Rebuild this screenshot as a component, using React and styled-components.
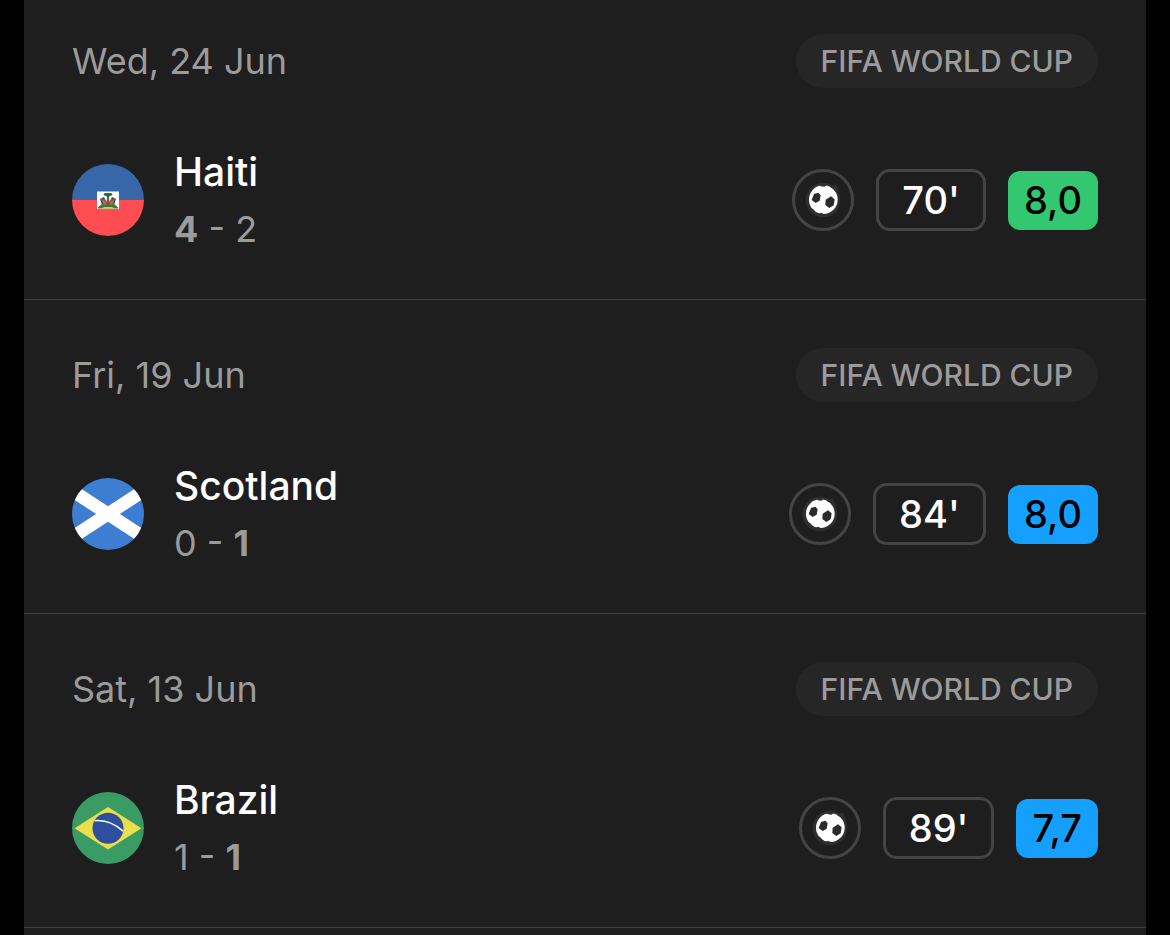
import React from 'react'
import styled, { createGlobalStyle } from 'styled-components'

const GlobalStyle = createGlobalStyle`
  * {
    box-sizing: border-box;
  }
  body {
    margin: 0;
    background: #000;
    color: #fff;
    font-family: Inter, 'Liberation Sans', sans-serif;
  }
`

const Page = styled.main`
  padding: 0 24px;
  height: 100vh;
  overflow: hidden;
`

const MatchList = styled.ul`
  list-style: none;
  margin: 0;
  padding: 0;
  min-height: 100%;
  background: #1e1e1e;
`

const MatchItem = styled.li`
  display: flex;
  flex-direction: column;
  gap: 59px;
  padding: 48px 48px 46px;
  border-bottom: 1px solid #3e3e3e;

  &:first-child {
    padding-top: 34px;
  }
`

const Row = styled.div`
  display: flex;
  justify-content: space-between;
  align-items: center;
`

const MatchDate = styled.time`
  color: #9b9b9b;
  font-size: 36px;
  line-height: 54px;
`

const League = styled.span`
  padding: 0 25px;
  border-radius: 27px;
  background: #262626;
  color: #9b9b9b;
  font-size: 30px;
  font-weight: 500;
  line-height: 54px;
`

const Team = styled.div`
  display: flex;
  align-items: center;
  gap: 30px;
`

const Flag = styled.svg`
  width: 72px;
  height: 72px;
  border-radius: 50%;
`

const TeamInfo = styled.div`
  display: flex;
  flex-direction: column;
  gap: 8px;
`

const TeamName = styled.h2`
  margin: 0;
  font-size: 39px;
  font-weight: 500;
  line-height: 50px;
`

const Score = styled.p`
  margin: 0;
  color: #9b9b9b;
  font-size: 36px;
  line-height: 48px;
`

const Goals = styled.span`
  font-weight: ${({ $winner }) => ($winner ? 700 : 400)};
`

const Stats = styled.div`
  display: flex;
  align-items: center;
  gap: 22px;
`

const GoalBadge = styled.span`
  display: flex;
  align-items: center;
  justify-content: center;
  width: 62px;
  height: 62px;
  border: 3px solid #444;
  border-radius: 50%;
`

const Ball = styled.svg`
  width: 36px;
  height: 36px;
`

const Minutes = styled.span`
  padding: 0 23px;
  border: 3px solid #444;
  border-radius: 14px;
  font-size: 38px;
  font-weight: 500;
  line-height: 56px;
`

const Rating = styled.span`
  padding: 0 16px;
  border-radius: 12px;
  background: ${({ $best }) => ($best ? '#33c771' : '#159fff')};
  color: #000;
  font-size: 38px;
  font-weight: 500;
  line-height: 59px;
`

const HaitiFlag = () => (
  <Flag viewBox="0 0 72 72" role="img" aria-label="Haiti">
    <path fill="#3766a9" d="M0 0h72v36H0z" />
    <path fill="#ff4d51" d="M0 36h72v36H0z" />
    <path fill="#fff" d="M25 27.500h22v17.500H25z" />
    <path fill="#397c39" d="M25.500 44.500q3-6 10.500-6t10.500 6z" />
    <path fill="#d9c27c" d="M29 44.800l3-1.800h8l3 1.800z" />
    <path fill="#2c3e86" d="M28 35l4-2 3 6-5 2zM44 35l-4-2-3 6 5 2z" />
    <path fill="#b64b3b" d="M29.500 37l3-2.500 2.500 5-3 1.500zM42.500 37l-3-2.500-2.500 5 3 1.500z" />
    <path stroke="#a8863e" strokeWidth="1" fill="none" d="M28 42l7-5M44 42l-7-5M29 34l5 7M43 34l-5 7" />
    <path fill="#7b5a2c" d="M35.200 31h1.600l.8 11h-3.200z" />
    <path fill="#1d6b35" d="M31.500 30.500q1-2 3-1.200 1.500-1.300 3 0 2-.8 3 1.200-1 1.700-2.500 1.200-1 1.800-2 1.800t-2-1.800q-1.500.5-2.500-1.200z" />
  </Flag>
)

const ScotlandFlag = () => (
  <Flag viewBox="0 0 72 72" role="img" aria-label="Scotland">
    <path fill="#3d7dd2" d="M0 0h72v72H0z" />
    <path stroke="#fff" strokeWidth="13" d="M-6 8.500l84 55M78 8.500l-84 55" />
  </Flag>
)

const BrazilFlag = () => (
  <Flag viewBox="0 0 72 72" role="img" aria-label="Brazil">
    <path fill="#3a9b64" d="M0 0h72v72H0z" />
    <path fill="#eade4c" d="M36 15l33.500 21.300L36 57.500 2.500 36.300z" />
    <circle cx="36" cy="36.300" r="15.500" fill="#2d4f9e" />
    <path fill="none" stroke="#fff" strokeWidth="1.600" d="M22.500 28.700q15.500-1.500 28.500 10.500" />
  </Flag>
)

const BallIcon = () => (
  <Ball viewBox="0 0 108 108" role="img" aria-label="Goal">
    <circle cx="54" cy="54" r="52" fill="#2f2f2f" />
    <circle cx="55" cy="53" r="43" fill="#fff" />
    <path
      fill="#2b2b2b"
      d="M27 36l13-4 7 8-3 16-12 7-12-9zM62 53l16-10 11 9-3 18-13 8-12-9z"
    />
    <path
      fill="#2f2f2f"
      d="M44 8l3 5 12 1 6-6zM74 10l3 7 11 4 3 7 12 2-10-22zM17 78l7 3 6 7-5 5-14-8zM40 95l11-3 5 6-12 2z"
    />
  </Ball>
)

const matches = [
  { date: 'Wed, 24 Jun', dateTime: '06-24', team: 'Haiti', flag: <HaitiFlag />, home: 4, away: 2, bold: 'home', minutes: 70, rating: '8,0', best: true },
  { date: 'Fri, 19 Jun', dateTime: '06-19', team: 'Scotland', flag: <ScotlandFlag />, home: 0, away: 1, bold: 'away', minutes: 84, rating: '8,0' },
  { date: 'Sat, 13 Jun', dateTime: '06-13', team: 'Brazil', flag: <BrazilFlag />, home: 1, away: 1, bold: 'away', minutes: 89, rating: '7,7' },
]

const Match = ({ match }) => {
  return (
    <MatchItem>
      <Row>
        <MatchDate dateTime={match.dateTime}>{match.date}</MatchDate>
        <League>FIFA WORLD CUP</League>
      </Row>
      <Row>
        <Team>
          {match.flag}
          <TeamInfo>
            <TeamName>{match.team}</TeamName>
            <Score>
              <Goals $winner={match.bold === 'home'}>{match.home}</Goals>
              {' - '}
              <Goals $winner={match.bold === 'away'}>{match.away}</Goals>
            </Score>
          </TeamInfo>
        </Team>
        <Stats>
          <GoalBadge>
            <BallIcon />
          </GoalBadge>
          <Minutes>{match.minutes}'</Minutes>
          <Rating $best={match.best}>{match.rating}</Rating>
        </Stats>
      </Row>
    </MatchItem>
  )
}

const App = () => {
  return (
    <>
      <GlobalStyle />
      <Page>
        <MatchList>
          {matches.map((match) => (
            <Match match={match} key={match.team} />
          ))}
        </MatchList>
      </Page>
    </>
  )
}

export default App
